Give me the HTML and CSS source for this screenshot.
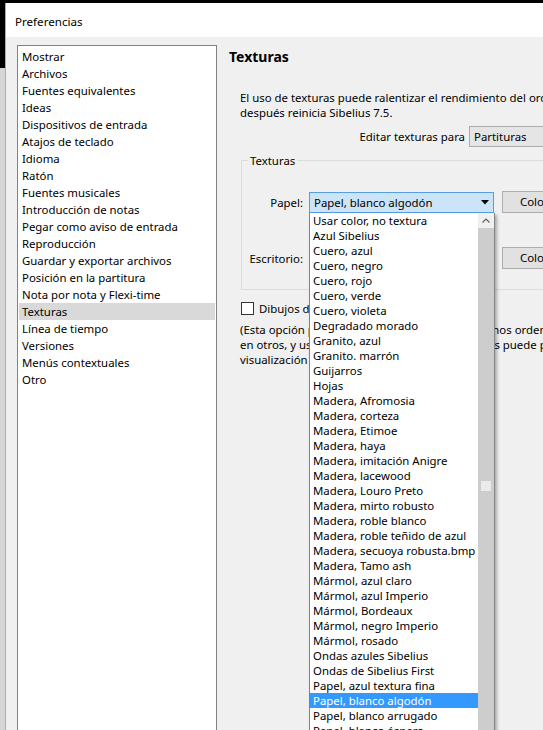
FILE: index.html
```html
<!DOCTYPE html>
<html lang="es">
<head>
<meta charset="utf-8">
<title>Preferencias</title>
<link rel="stylesheet" href="styles.css">
</head>
<body>
<div class="window">
  <div class="titlebar">Preferencias</div>
  <div class="content">
    <ul class="nav">
      <li>Mostrar</li>
      <li>Archivos</li>
      <li>Fuentes equivalentes</li>
      <li>Ideas</li>
      <li>Dispositivos de entrada</li>
      <li>Atajos de teclado</li>
      <li>Idioma</li>
      <li>Ratón</li>
      <li>Fuentes musicales</li>
      <li>Introducción de notas</li>
      <li>Pegar como aviso de entrada</li>
      <li>Reproducción</li>
      <li>Guardar y exportar archivos</li>
      <li>Posición en la partitura</li>
      <li>Nota por nota y Flexi-time</li>
      <li class="selected">Texturas</li>
      <li>Línea de tiempo</li>
      <li>Versiones</li>
      <li>Menús contextuales</li>
      <li>Otro</li>
    </ul>
    <div class="panel">
      <h1 class="heading">Texturas</h1>
      <p class="intro">El uso de texturas puede ralentizar el rendimiento del ordenador; si ves problemas, desactívalas y<br>después reinicia Sibelius 7.5.</p>
      <div class="edit-row">
        <span class="edit-label">Editar texturas para</span>
        <div class="combo combo-grey">Partituras</div>
      </div>
      <fieldset class="group">
        <legend>Texturas</legend>
        <div class="tex-row">
          <span class="tex-label">Papel:</span>
          <div class="combo combo-focus">
            <span>Papel, blanco algodón</span>
            <svg class="arrow" width="8" height="5" viewBox="0 0 8 5"><path d="M0 0H8L4 4.5Z" fill="#000"/></svg>
            <div class="dropdown">
              <ul class="options">
                <li>Usar color, no textura</li>
                <li>Azul Sibelius</li>
                <li>Cuero, azul</li>
                <li>Cuero, negro</li>
                <li>Cuero, rojo</li>
                <li>Cuero, verde</li>
                <li>Cuero, violeta</li>
                <li>Degradado morado</li>
                <li>Granito, azul</li>
                <li>Granito. marrón</li>
                <li>Guijarros</li>
                <li>Hojas</li>
                <li>Madera, Afromosia</li>
                <li>Madera, corteza</li>
                <li>Madera, Etimoe</li>
                <li>Madera, haya</li>
                <li>Madera, imitación Anigre</li>
                <li>Madera, lacewood</li>
                <li>Madera, Louro Preto</li>
                <li>Madera, mirto robusto</li>
                <li>Madera, roble blanco</li>
                <li>Madera, roble teñido de azul</li>
                <li>Madera, secuoya robusta.bmp</li>
                <li>Madera, Tamo ash</li>
                <li>Mármol, azul claro</li>
                <li>Mármol, azul Imperio</li>
                <li>Mármol, Bordeaux</li>
                <li>Mármol, negro Imperio</li>
                <li>Mármol, rosado</li>
                <li>Ondas azules Sibelius</li>
                <li>Ondas de Sibelius First</li>
                <li>Papel, azul textura fina</li>
                <li class="hl">Papel, blanco algodón</li>
                <li>Papel, blanco arrugado</li>
                <li>Papel, blanco áspero</li>
                <li>Papel, crema</li>
              </ul>
              <div class="scrollbar">
                <div class="sb-up"><svg width="8" height="5" viewBox="0 0 8 5"><path d="M0.5 4.5L4 1L7.5 4.5" fill="none" stroke="#606060" stroke-width="1.2"/></svg></div>
                <div class="sb-track"><div class="sb-dot"></div></div>
              </div>
            </div>
          </div>
          <div class="button">Color...</div>
        </div>
        <div class="tex-row row-desk">
          <span class="tex-label">Escritorio:</span>
          <div class="combo combo-plain"><span>Madera, haya</span></div>
          <div class="button">Color...</div>
        </div>
      </fieldset>
      <div class="check-row">
        <span class="checkbox"></span>
        <span>Dibujos de texturas de alta calidad</span>
      </div>
      <p class="note">(Esta opción puede que no funcione así en algunos ordenadores<br>en otros, y usar texturas de fondo en las páginas puede provocar problemas<br>visualización en pantalla)</p>
    </div>
  </div>
</div>
</body>
</html>
```
FILE: styles.css
```css
html, body {
  margin: 0;
  padding: 0;
}
body {
  width: 543px;
  height: 730px;
  overflow: hidden;
  background: linear-gradient(to bottom, #000 0, #000 68px, #d6d6d6 68px);
  font-family: "Noto Sans", "Open Sans", sans-serif;
  font-size: 11.4px;
  color: #000;
}
.window {
  margin: 3px 0 0 5px;
  width: 538px;
  height: 727px;
  border-left: 1px solid #8fb3dc;
  box-sizing: border-box;
  background: #f0f0f0;
  overflow: hidden;
}
.titlebar {
  height: 34px;
  box-sizing: border-box;
  padding: 3px 0 0 9px;
  line-height: 31px;
  background: #fff;
  font-size: 11.6px;
}
.content {
  display: flex;
  padding: 8px 0 0 11px;
  width: 800px;
}
.nav {
  list-style: none;
  margin: 0;
  padding: 2px 1px;
  width: 200px;
  height: 720px;
  box-sizing: border-box;
  flex: none;
  background: #fff;
  border: 1px solid #828282;
}
.nav li {
  height: 17px;
  line-height: 17px;
  padding-left: 3px;
  white-space: nowrap;
}
.nav li.selected {
  background: #d9d9d9;
}
.panel {
  margin-left: 12px;
  width: 420px;
  flex: none;
}
.heading {
  margin: 2px 0 0 0;
  font-size: 14px;
  font-weight: 700;
  line-height: 20px;
}
.intro {
  margin: 23px 0 0 11px;
  line-height: 15px;
  white-space: nowrap;
}
.edit-row {
  display: flex;
  align-items: center;
  margin-top: 6px;
  margin-left: 11px;
}
.edit-label {
  width: 225px;
  text-align: right;
  white-space: nowrap;
}
.combo {
  position: relative;
  height: 21px;
  box-sizing: border-box;
  line-height: 19px;
  padding-left: 4px;
  white-space: nowrap;
}
.combo-grey {
  margin-left: 4px;
  width: 140px;
  background: #e5e5e5;
  border: 1px solid #acacac;
}
.group {
  margin: 6px 0 0 12px;
  padding: 0 0 20px 0;
  width: 400px;
  border: 1px solid #dcdcdc;
}
.group legend {
  margin-left: 6px;
  padding: 0 2px;
  line-height: 15px;
}
.tex-row {
  display: flex;
  align-items: center;
  height: 22px;
  margin-top: 23px;
}
.row-desk {
  margin-top: 34px;
}
.tex-label {
  width: 61px;
  text-align: right;
  white-space: nowrap;
}
.tex-row .combo {
  margin-left: 6px;
  width: 185px;
  display: flex;
  align-items: center;
}
.combo-focus {
  background: #cce4f7;
  border: 1px solid #569de5;
}
.combo-plain {
  background: #e5e5e5;
  border: 1px solid #acacac;
}
.arrow {
  margin-left: auto;
  margin-right: 4px;
}
.button {
  margin-left: 8px;
  width: 72px;
  height: 22px;
  box-sizing: border-box;
  background: #e1e1e1;
  border: 1px solid #adadad;
  text-align: center;
  line-height: 20px;
}
.check-row {
  display: flex;
  align-items: center;
  margin: 11px 0 0 12px;
  height: 15px;
  white-space: nowrap;
}
.checkbox {
  width: 13px;
  height: 13px;
  box-sizing: border-box;
  border: 1px solid #333;
  background: #fff;
  margin-right: 5px;
  flex: none;
}
.note {
  margin: 6px 0 0 11px;
  line-height: 15px;
  white-space: nowrap;
}
.dropdown {
  position: absolute;
  top: 20px;
  left: -1px;
  width: 186px;
  height: 560px;
  box-sizing: border-box;
  display: flex;
  background: #fff;
  border-left: 1px solid #828282;
  border-right: 1px solid #858585;
  box-shadow: 2px 2px 3px rgba(0, 0, 0, 0.3);
  z-index: 5;
}
.options {
  list-style: none;
  margin: 0;
  padding: 0;
  width: 168px;
  flex: none;
}
.options li {
  height: 15px;
  line-height: 15px;
  padding-left: 3px;
  white-space: nowrap;
}
.options li.hl {
  background: #3399ff;
  color: #fff;
}
.scrollbar {
  width: 16px;
  flex: none;
  display: flex;
  flex-direction: column;
}
.sb-up {
  height: 15px;
  background: #f0f0f0;
  display: flex;
  align-items: center;
  justify-content: center;
}
.sb-track {
  flex: 1;
  background: #cdcdcd;
  position: relative;
}
.sb-dot {
  position: absolute;
  left: 3px;
  top: 253px;
  width: 10px;
  height: 10px;
  background: #ebebeb;
}
```
